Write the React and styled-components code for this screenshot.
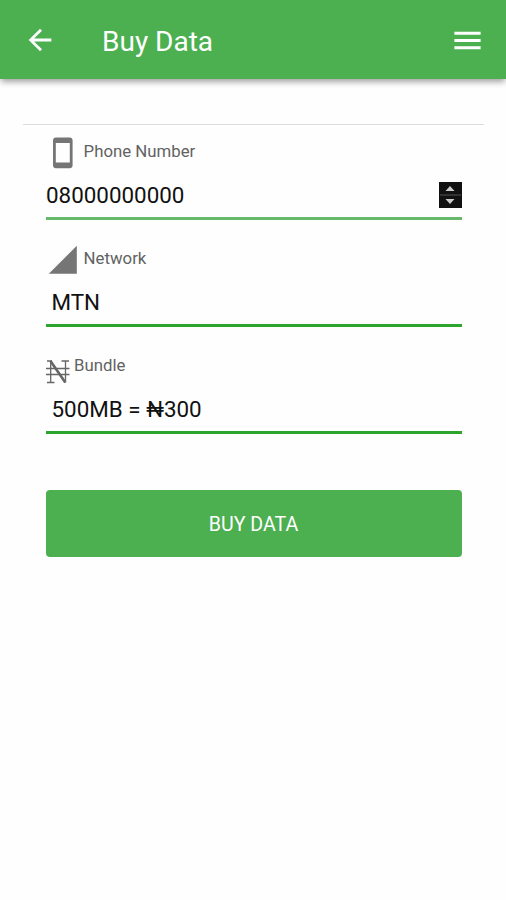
import React from 'react';
import styled, { createGlobalStyle } from 'styled-components';

const GlobalStyle = createGlobalStyle`
  * {
    box-sizing: border-box;
  }

  body {
    margin: 0;
    background: #fefefe;
    font-family: Roboto, 'Noto Sans', sans-serif;
  }
`;

const Page = styled.div`
  width: 100%;
  min-height: 900px;
`;

const Header = styled.header`
  display: flex;
  align-items: center;
  height: 79px;
  padding: 2px 21px 0 23px;
  background: #4caf50;
  color: #fff;
  box-shadow: 0 4px 6px -1px rgba(0, 0, 0, 0.36);
`;

const HeaderIcon = styled.svg`
  flex: none;
  width: ${({ $size }) => $size}px;
  height: ${({ $size }) => $size}px;
  margin-top: ${({ $top }) => $top}px;
  fill: currentColor;
`;

const Title = styled.h1`
  flex: 1;
  margin: 2px 0 0 45px;
  font-size: 28px;
  font-weight: 400;
  line-height: 40px;
`;

const Form = styled.form`
  margin: 45px 22px 0 23px;
  padding: 0 22px 0 23px;
  border-top: 1px solid #dcdcdc;
`;

const Field = styled.div`
  margin-bottom: 12px;
  border-bottom: 3px solid ${({ $line }) => $line};
`;

const LabelRow = styled.div`
  display: flex;
  align-items: flex-start;
  height: 52px;
  padding-top: 11px;
`;

const FieldIcon = styled.svg`
  width: 33.6px;
  height: 33.6px;
  fill: #757575;
`;

const NairaIcon = styled.svg`
  width: 24px;
  height: 24px;
  margin-top: 10px;
  fill: none;
  stroke: #666;
`;

const Label = styled.label`
  margin-left: 4px;
  color: #626262;
  font-size: 16.8px;
  line-height: 30px;
`;

const ValueRow = styled.div`
  display: flex;
  align-items: center;
  justify-content: space-between;
  height: 40px;
  padding: 0 0 5px ${({ $indent }) => $indent}px;
  color: #111;
  font-size: 22.4px;
  line-height: 26px;
`;

const Stepper = styled.svg`
  width: 23px;
  height: 26px;
`;

const SubmitButton = styled.button`
  width: 100%;
  height: 67px;
  margin-top: 44px;
  padding: 2px 1px 0 0;
  border: 0;
  border-radius: 4px;
  background: #4caf50;
  color: #fff;
  font-family: inherit;
  font-size: 19.6px;
  line-height: 24px;
`;

const App = () => {
  return (
    <Page>
      <GlobalStyle />
      <Header>
        <HeaderIcon $size={34} $top={-2} viewBox="0 0 24 24">
          <path d="M20 11H7.83l5.59-5.59L12 4l-8 8 8 8 1.41-1.41L7.83 13H20v-2z" />
        </HeaderIcon>
        <Title>Buy Data</Title>
        <HeaderIcon $size={35} $top={-1} viewBox="0 0 24 24">
          <path d="M3 18h18v-2H3v2zm0-5h18v-2H3v2zm0-7v2h18V6H3z" />
        </HeaderIcon>
      </Header>

      <Form>
        <Field $line="#66b96a">
          <LabelRow>
            <FieldIcon viewBox="0 0 24 24">
              <path d="M17 1.01L7 1c-1.1 0-1.99.9-1.99 2v18c0 1.1.89 2 1.99 2h10c1.1 0 2-.9 2-2V3c0-1.1-.9-1.99-2-1.99zM17 19H7V5h10v14z" />
            </FieldIcon>
            <Label>Phone Number</Label>
          </LabelRow>
          <ValueRow $indent={0}>
            08000000000
            <Stepper viewBox="0 0 23 26">
              <path fill="#111" d="M0 0h23v26H0z" />
              <path fill="#555" d="M1 12.5h21v1H1z" />
              <path fill="#ccc" d="M11 4l4.5 5h-9zM11 22l4.5-5h-9z" />
            </Stepper>
          </ValueRow>
        </Field>

        <Field $line="#2ca52f">
          <LabelRow>
            <FieldIcon viewBox="0 0 24 24">
              <path d="M2 22h20V2z" />
            </FieldIcon>
            <Label>Network</Label>
          </LabelRow>
          <ValueRow $indent={5.5}>MTN</ValueRow>
        </Field>

        <Field $line="#2ca52f">
          <LabelRow>
            <NairaIcon viewBox="0 0 24 24">
              <path strokeWidth="1.3" d="M4.7 1v21.5M19.5 1v21.5M1 1h5M15.5 1h7.5M1 22.5h7.5" />
              <path strokeWidth="2.6" d="M4.5 1L19.3 22.5" />
              <path strokeWidth="1.4" d="M0 8.5h23.5M0 14.5h23.5" />
            </NairaIcon>
            <Label>Bundle</Label>
          </LabelRow>
          <ValueRow $indent={5.5}>500MB = ₦300</ValueRow>
        </Field>

        <SubmitButton type="button">BUY DATA</SubmitButton>
      </Form>
    </Page>
  );
};

export default App;
